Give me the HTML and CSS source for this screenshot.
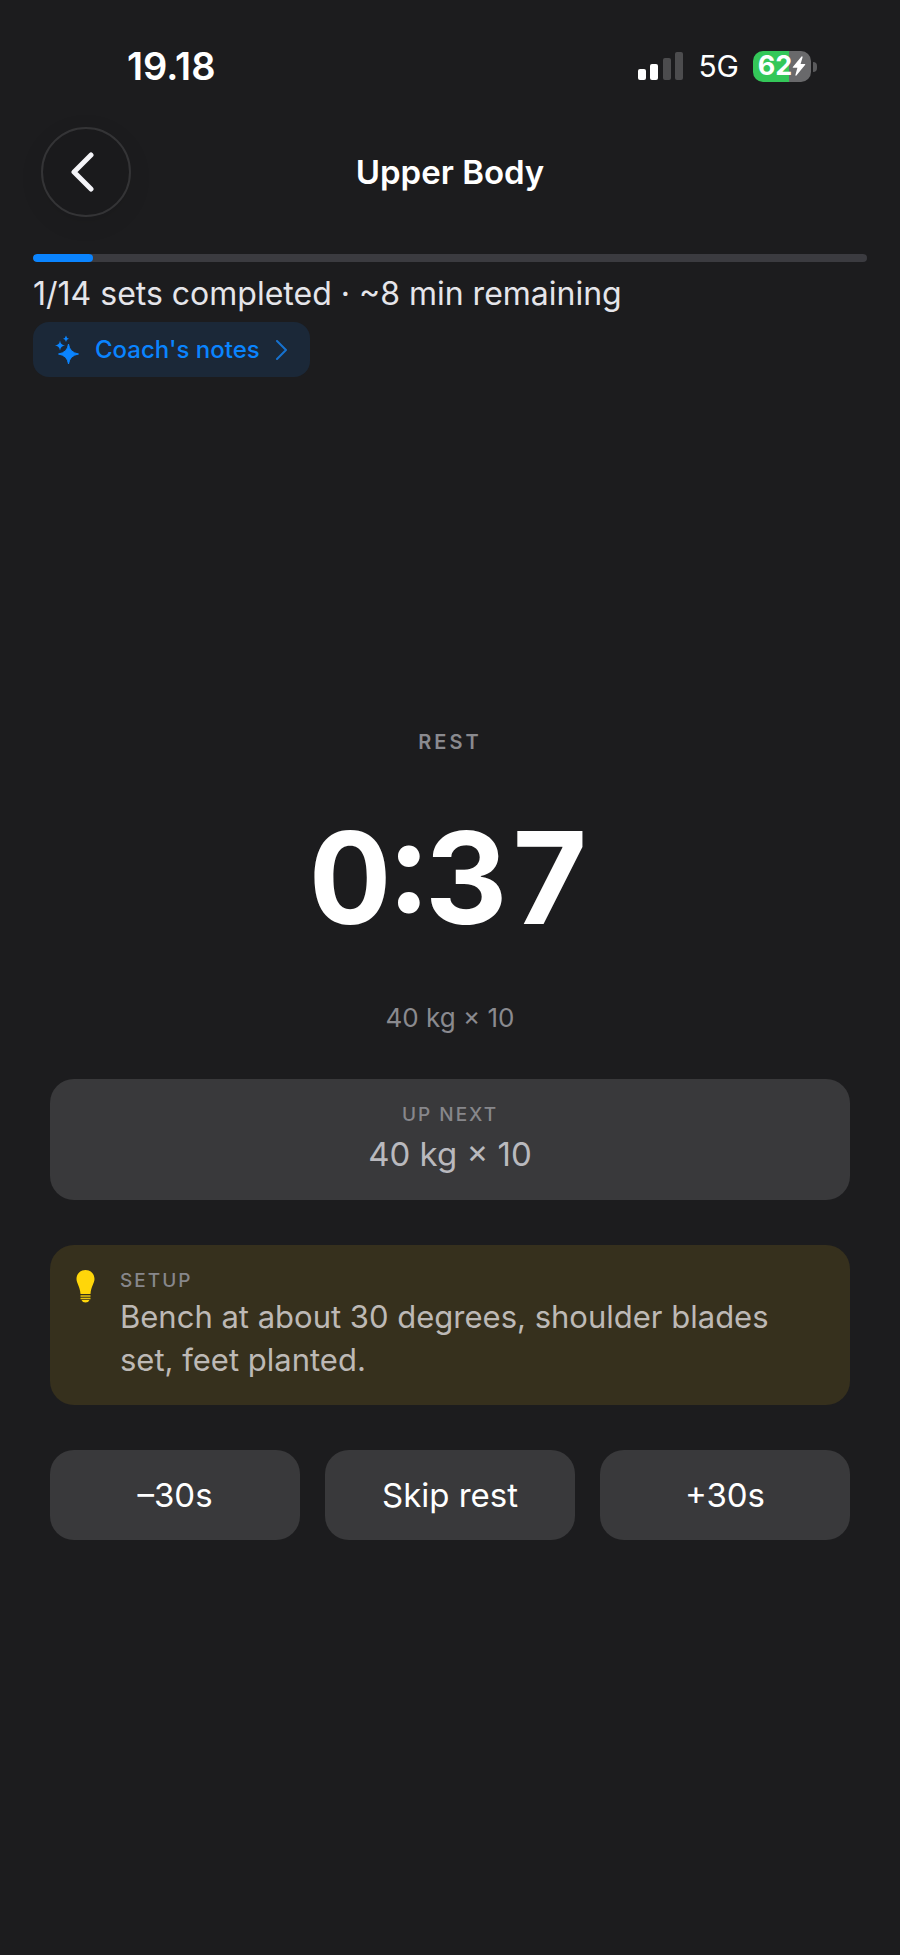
FILE: index.html
```html
<!DOCTYPE html>
<html lang="en">
<head>
    <meta charset="UTF-8">
    <meta name="viewport" content="width=device-width, initial-scale=1.0">
    <title>Upper Body</title>
    <link rel="stylesheet" href="styles.css">
</head>
<body>
    <div class="status-bar">
        <span class="clock">19.18</span>
        <div class="status-icons">
            <svg class="signal" width="46" height="29" viewBox="0 0 46 29">
                <rect x="0" y="17" width="8" height="11" rx="2" fill="#fff"/>
                <rect x="12" y="12" width="8" height="16" rx="2" fill="#fff"/>
                <rect x="25" y="6" width="8" height="22" rx="2" fill="#4c4c4e"/>
                <rect x="37" y="0" width="8" height="28" rx="2" fill="#4c4c4e"/>
            </svg>
            <span class="network">5G</span>
            <div class="battery">
                <span class="battery-level">62</span>
                <svg width="14" height="20" viewBox="0 0 14 20">
                    <path d="M9.5 0.5 L0.8 11 Q0.4 11.8 1.2 11.8 H5.4 L3.4 19 Q3.4 20 4.4 19.4 L13.2 8.8 Q13.6 8 12.8 8 H8.6 L10.6 1.2 Q10.5 0 9.5 0.5 Z" fill="#fff"/>
                </svg>
            </div>
        </div>
    </div>

    <header class="header">
        <button class="back" aria-label="Back">
            <svg width="24" height="40" viewBox="0 0 24 40">
                <path d="M20 3 L3 20 L20 37" fill="none" stroke="#f4f4f8" stroke-width="5" stroke-linecap="round" stroke-linejoin="round"/>
            </svg>
        </button>
        <h1>Upper Body</h1>
    </header>

    <section class="progress">
        <div class="track">
            <div class="fill" style="width: 7.14%"></div>
        </div>
        <p>1/14 sets completed · ~8 min remaining</p>
        <button class="notes">
            <svg width="24" height="30" viewBox="0 0 24 30">
                <path d="M13.5 9 Q14.5 17.5 23.5 19 Q14.5 20.5 13.5 29 Q12.5 20.5 3.5 19 Q12.5 17.5 13.5 9 Z" fill="#0a84ff" stroke="#0a84ff" stroke-width="1" stroke-linejoin="round"/>
                <path d="M5 5.5 Q5.6 10 10 10.5 Q5.6 11 5 15.5 Q4.4 11 0 10.5 Q4.4 10 5 5.5 Z" fill="#0a84ff"/>
                <path d="M11 0.5 Q11.4 3.2 14 3.8 Q11.4 4.4 11 7 Q10.6 4.4 8 3.8 Q10.6 3.2 11 0.5 Z" fill="#0a84ff"/>
            </svg>
            <span>Coach's notes</span>
            <svg width="12" height="20" viewBox="0 0 12 20">
                <path d="M1 1 L10 10 L1 19" fill="none" stroke="#1672cf" stroke-width="2" stroke-linecap="round" stroke-linejoin="round"/>
            </svg>
        </button>
    </section>

    <main class="rest">
        <h2>Rest</h2>
        <div class="timer">0:37</div>
        <p class="last-set">40 kg × 10</p>

        <div class="card up-next">
            <h3>Up next</h3>
            <p>40 kg × 10</p>
        </div>

        <div class="card setup">
            <svg width="21" height="34" viewBox="0 0 20 34">
                <path d="M10 1 C4.5 1 1 5 1 10 C1 14.500 4.5 17 5 25 H15 C15.5 17 19 14.500 19 10 C19 5 15.5 1 10 1 Z" fill="#ffd60a"/>
                <path d="M5 27 H15 M5 29.5 H15" stroke="#e6c20c" stroke-width="1.4"/>
                <path d="M6 31 H14 Q13 33.5 10 33.5 Q7 33.5 6 31 Z" fill="#ffd60a"/>
            </svg>
            <div>
                <h3>Setup</h3>
                <p>Bench at about 30 degrees, shoulder blades set, feet planted.</p>
            </div>
        </div>

        <div class="actions">
            <button>–30s</button>
            <button>Skip rest</button>
            <button>+30s</button>
        </div>
    </main>
</body>
</html>
```
FILE: styles.css
```css
* {
    box-sizing: border-box;
    margin: 0;
    padding: 0;
}
body {
    font-family: Inter, 'Liberation Sans', sans-serif;
    background: #1c1c1e;
    color: #fff;
    min-height: 100vh;
    display: flex;
    flex-direction: column;
}
svg {
    display: block;
    flex-shrink: 0;
}
button {
    font-family: inherit;
    color: inherit;
    border: none;
    cursor: pointer;
}
.status-bar {
    display: flex;
    justify-content: space-between;
    align-items: center;
    padding: 44px 89px 0 127px;
    line-height: 44px;
}
.clock {
    font-size: 38px;
    font-weight: 600;
}
.status-icons {
    display: flex;
    align-items: center;
    gap: 14px;
}
.network {
    font-size: 30px;
}
.battery {
    position: relative;
    display: flex;
    align-items: center;
    justify-content: center;
    width: 58px;
    height: 31px;
    border-radius: 10px;
    background: linear-gradient(to right, #34c759 62%, #69696b 62%);
}
.battery::after {
    content: '';
    position: absolute;
    left: 60px;
    top: 11px;
    width: 4px;
    height: 10px;
    border-radius: 0 4px 4px 0;
    background: #5a5a5c;
}
.battery-level {
    font-size: 27px;
    font-weight: 700;
}
.header {
    display: grid;
    grid-template-columns: 90px 1fr 90px;
    align-items: center;
    padding: 39px 41px 0;
}
.back {
    display: flex;
    align-items: center;
    justify-content: center;
    height: 90px;
    padding-right: 6px;
    border-radius: 50%;
    border: 2px solid #343436;
    background: #1a1a1c;
    box-shadow: 0 6px 24px rgba(0, 0, 0, 0.08);
}
h1 {
    font-size: 33px;
    font-weight: 600;
    text-align: center;
}
.progress {
    padding: 37px 33px 0;
}
.track {
    height: 8px;
    border-radius: 4px;
    background: #3b3b40;
    overflow: hidden;
}
.fill {
    height: 100%;
    border-radius: 4px;
    background: #0a84ff;
}
.progress p {
    margin-top: 10px;
    font-size: 32px;
    line-height: 44px;
    color: #e5e5ea;
}
.notes {
    display: flex;
    align-items: center;
    gap: 16px;
    height: 55px;
    margin-top: 6px;
    padding: 0 22px;
    border-radius: 16px;
    background: #1b2838;
    color: #0a84ff;
    font-size: 24px;
    font-weight: 500;
}
.rest {
    flex: 1;
    display: flex;
    flex-direction: column;
    justify-content: center;
    padding: 0 50px 64px;
    text-align: center;
}
h2 {
    font-size: 20px;
    line-height: 28px;
    font-weight: 600;
    letter-spacing: 3px;
    text-transform: uppercase;
    color: #8a8a8f;
}
.timer {
    margin-top: 42px;
    font-size: 128px;
    line-height: 160px;
    font-weight: 700;
    font-variant-numeric: tabular-nums;
}
.last-set {
    margin-top: 42px;
    font-size: 26px;
    line-height: 36px;
    color: #8a8a8f;
}
.card {
    border-radius: 24px;
}
h3 {
    font-size: 19px;
    line-height: 24px;
    font-weight: 500;
    letter-spacing: 2px;
    text-transform: uppercase;
    color: #87878b;
}
.up-next {
    margin-top: 43px;
    padding: 24px;
    background: #39393b;
}
.up-next p {
    margin-top: 5px;
    font-size: 33px;
    line-height: 44px;
    color: #b9b9be;
}
.setup {
    display: flex;
    gap: 24px;
    margin-top: 45px;
    padding: 24px 25px;
    background: #36301d;
    text-align: left;
}
.setup p {
    margin-top: 2px;
    font-size: 31px;
    line-height: 43px;
    color: #bdb9b6;
}
.actions {
    display: grid;
    grid-template-columns: repeat(3, 1fr);
    gap: 25px;
    margin-top: 45px;
}
.actions button {
    height: 90px;
    border-radius: 24px;
    background: #39393b;
    font-size: 33px;
}
```
